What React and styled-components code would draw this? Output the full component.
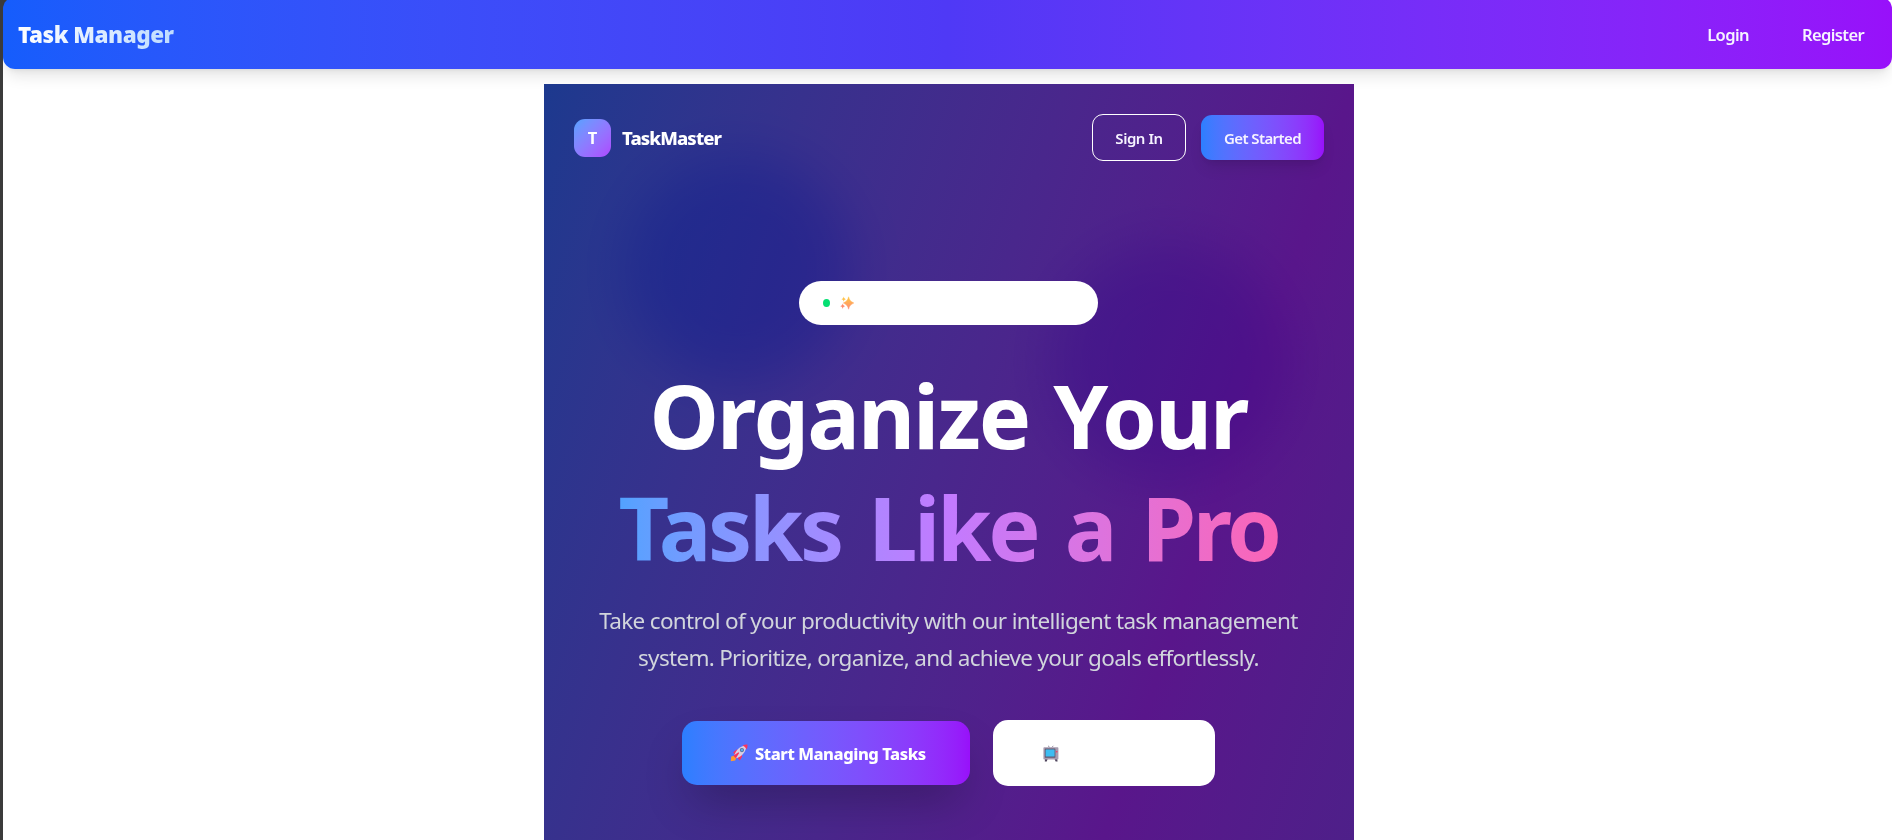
import React from "react";
import styled, { createGlobalStyle } from "styled-components";

const Global = createGlobalStyle`
  *, *::before, *::after { box-sizing: border-box; }
  html, body { margin: 0; height: 840px; overflow: hidden; background: #fff; }
  body { font-family: "Noto Sans", "Open Sans", sans-serif; color: #fff; }
  button, a { font: inherit; color: inherit; text-decoration: none; }
`;

const Page = styled.div`
  height: 840px;
  overflow: hidden;
  border-left: 3px solid #3b3b3b;
  background: #fff;
`;

const NavBackdrop = styled.div`
  background: linear-gradient(to right, #3b3b3b 0 12px, #fff 12px);
  height: 12px;
  margin-bottom: -15px;
`;

const NavBar = styled.nav`
  position: relative;
  display: flex;
  align-items: center;
  justify-content: space-between;
  height: 72px;
  padding: 4px 28px 0 15px;
  border-radius: 12px;
  background: linear-gradient(to right in oklab, #155dfc, #4f39f6, #9810fa);
  box-shadow: 0 10px 15px -3px rgba(0, 0, 0, 0.1), 0 4px 6px -4px rgba(0, 0, 0, 0.1);
`;

const Brand = styled.span`
  font-size: 22.5px;
  font-weight: 900;
  line-height: 30px;
  letter-spacing: -0.5px;
  background: linear-gradient(to right in oklab, #fff, #bedbff);
  background-clip: text;
  color: transparent;
`;

const NavLinks = styled.div`
  display: flex;
  gap: 53px;
`;

const NavLink = styled.a`
  font-size: 16.5px;
  font-weight: 600;
  line-height: 24px;
  color: #f6f3ff;
  letter-spacing: ${(p) => p.$spacing};
`;

const Hero = styled.main`
  position: relative;
  width: 810px;
  height: 2440px;
  margin: 15px auto 0 541px;
  background: linear-gradient(to bottom right in oklab, #1c398e, #59168b, #312c85);
`;

const Glow = styled.div`
  position: absolute;
  left: ${(p) => p.$x}px;
  top: ${(p) => p.$y}px;
  width: ${(p) => p.$size}px;
  height: ${(p) => p.$size}px;
  border-radius: 50%;
  background: ${(p) => p.$color};
  mix-blend-mode: multiply;
  filter: blur(28px);
  opacity: ${(p) => p.$opacity};
`;

const HeroContent = styled.div`
  position: relative;
  display: flex;
  flex-direction: column;
  align-items: center;
  width: 809px;
`;

const HeroHeader = styled.header`
  display: flex;
  align-items: center;
  justify-content: space-between;
  width: 100%;
  padding: 30px 29px 30px 30px;
`;

const Group = styled.div`
  display: flex;
  align-items: center;
  gap: ${(p) => p.$gap}px;
`;

const LogoMark = styled.div`
  display: grid;
  place-items: center;
  width: 37px;
  height: 38px;
  border-radius: 11px;
  background: linear-gradient(to bottom right in oklab, #51a2ff, #ad46ff);
  font-size: 16.5px;
  font-weight: 700;
`;

const LogoText = styled.span`
  font-size: 18.5px;
  font-weight: 800;
  letter-spacing: -0.9px;
`;

const HeaderButton = styled.button`
  display: grid;
  place-items: center;
  width: ${(p) => p.$width}px;
  height: ${(p) => (p.$primary ? 45 : 47)}px;
  padding: 0;
  border: ${(p) => (p.$primary ? "0" : "1px solid #fff")};
  border-radius: 11px;
  background: ${(p) => (p.$primary ? "linear-gradient(to right in oklab, #2b7fff, #9810fa)" : "transparent")};
  box-shadow: ${(p) => (p.$primary ? "0 10px 15px -3px rgba(0,0,0,.1), 0 4px 6px -4px rgba(0,0,0,.1)" : "none")};
  color: #f6f3ff;
  font-size: 15px;
  font-weight: 600;
  letter-spacing: ${(p) => p.$spacing};
`;

const Badge = styled.div`
  display: flex;
  align-items: center;
  gap: 10px;
  width: 299px;
  height: 44px;
  margin-top: 90px;
  padding-left: 24px;
  border-radius: 22px;
  background: #fff;
`;

const Dot = styled.span`
  width: 7px;
  height: 8px;
  border-radius: 50%;
  background: #05df72;
`;

const Title = styled.h1`
  margin: 34px 0 0;
  font-size: 88px;
  font-weight: 700;
  line-height: 112px;
  text-align: center;
  white-space: nowrap;
`;

const TitleLine = styled.span`
  display: block;
  width: fit-content;
  margin: 0 auto;
  letter-spacing: ${(p) => p.$spacing};
  word-spacing: ${(p) => p.$words};
`;

const GradientLine = styled(TitleLine)`
  background: linear-gradient(to right in oklab, #51a2ff, #c27aff, #fb64b6);
  background-clip: text;
  color: transparent;
`;

const Lead = styled.p`
  margin: 19px 0 0;
  font-size: 22.5px;
  line-height: 37px;
  text-align: center;
  white-space: nowrap;
  color: #d1d5dc;
`;

const LeadLine = styled.span`
  display: block;
  letter-spacing: ${(p) => p.$spacing};
`;

const Actions = styled.div`
  display: flex;
  align-items: center;
  gap: 23px;
  margin-top: 44px;
`;

const ActionButton = styled.button`
  display: flex;
  align-items: center;
  gap: 7px;
  width: ${(p) => (p.$primary ? 288 : 222)}px;
  height: ${(p) => (p.$primary ? 64 : 66)}px;
  padding: 0 0 0 ${(p) => (p.$primary ? 48 : 50)}px;
  border: 0;
  border-radius: 15px;
  background: ${(p) => (p.$primary ? "linear-gradient(to right in oklab, #2b7fff, #9810fa)" : "#fff")};
  box-shadow: ${(p) => (p.$primary ? "0 23px 47px -11px rgba(0,0,0,.28)" : "none")};
  font-size: 16.5px;
  font-weight: 800;
  letter-spacing: -0.45px;
  white-space: nowrap;
`;

const Icon = styled.svg`
  display: block;
  flex: none;
`;

function Sparkles() {
  return (
    <Icon width="14" height="14" viewBox="0 0 14 14">
      <defs>
        <linearGradient id="spark" x1="0" y1="0" x2="0" y2="1">
          <stop offset="0" stopColor="#ffc83d" />
          <stop offset="1" stopColor="#ff8a78" />
        </linearGradient>
      </defs>
      <path fill="url(#spark)" d="M8.6 .8 C9.4 4.2 10.6 5.4 13.8 7 C10.6 8.6 9.4 9.8 8.6 13.2 C7.8 9.8 6.6 8.6 3.4 7 C6.6 5.4 7.8 4.2 8.6 .8Z" stroke="url(#spark)" strokeWidth=".5" />
      <path fill="#ffc44d" d="M3.7 .6 C4 2.2 4.6 2.8 6 3.2 C4.6 3.6 4 4.2 3.7 5.8 C3.4 4.2 2.8 3.6 1.4 3.2 C2.8 2.8 3.4 2.2 3.7 .6Z" />
      <path fill="#ff8a6c" d="M2.7 7.6 C3.1 9.3 3.7 9.9 5.2 10.3 C3.7 10.7 3.1 11.3 2.7 13 C2.3 11.3 1.7 10.7 .2 10.3 C1.7 9.9 2.3 9.3 2.7 7.6Z" />
    </Icon>
  );
}

function Rocket() {
  return (
    <Icon width="18" height="18" viewBox="0 0 18 18">
      <path fill="#ff9b2e" d="M1.2 12.4 4 11.8 6.2 14 5.2 16.4 .8 17.2Z" />
      <path fill="#f8345e" d="M3.2 8.2 6.6 5.6 8.6 6.6 5 11Z M9.8 16.4 12.2 12.6 11.6 9.6 7 13.6Z" />
      <path fill="#d9cfe3" d="M4.2 11.8 C5.6 6.4 9.8 1.8 16.2 1.2 C16.8 6.8 12.2 12.2 6.8 14.2Z" />
      <path fill="#f8345e" d="M12.6 1.6 C14.2 .6 16 .4 17.4 .6 C17.8 2.2 17.4 4 16.5 5.4 C15.6 3.6 14.4 2.4 12.6 1.6Z M3.3 11.7 8.4 8.2 9.2 9 5.9 14.2Z" />
      <circle cx="11.9" cy="6.1" r="2.1" fill="#536b94" />
      <circle cx="11.9" cy="6.1" r="1.3" fill="#5aa9e8" />
    </Icon>
  );
}

function Television() {
  return (
    <Icon width="16" height="17" viewBox="0 0 16 17">
      <path d="M5 .8 6.8 2.4 M10.4 .8 8.8 2.4" stroke="#998fa3" strokeWidth="1" />
      <path fill="#50465e" d="M2 14h2.6l-.8 2.6H1.8z M11.6 14h2.6l.4 2.6h-2z" />
      <rect x=".4" y="2.2" width="15" height="12.4" rx=".8" fill="#a79bb0" />
      <rect x="1.8" y="3.4" width="10.6" height="9.4" rx=".6" fill="#625970" />
      <rect x="2.6" y="4.4" width="9" height="7.2" rx=".5" fill="#3dbdf2" />
      <circle cx="13.8" cy="6.8" r=".8" fill="#f8345e" />
    </Icon>
  );
}

export default function App() {
  return (
    <Page>
      <Global />
      <NavBackdrop />
      <NavBar>
        <Brand>Task Manager</Brand>
        <NavLinks>
          <NavLink href="#login" $spacing="-0.6px">Login</NavLink>
          <NavLink href="#register" $spacing="-0.6px">Register</NavLink>
        </NavLinks>
      </NavBar>
      <Hero>
        <Glow $x={79} $y={70} $size={230} $color="#2b7fff" $opacity={0.38} />
        <Glow $x={506} $y={158} $size={240} $color="#9810fa" $opacity={0.33} />
        <HeroContent>
          <HeroHeader>
            <Group $gap={11}>
              <LogoMark>T</LogoMark>
              <LogoText>TaskMaster</LogoText>
            </Group>
            <Group $gap={15}>
              <HeaderButton $width={94} $spacing="-0.45px">Sign In</HeaderButton>
              <HeaderButton $primary $width={123} $spacing="-0.6px">Get Started</HeaderButton>
            </Group>
          </HeroHeader>
          <Badge>
            <Dot />
            <Sparkles />
          </Badge>
          <Title>
            <TitleLine $spacing="-2px" $words="3px">Organize Your</TitleLine>
            <GradientLine $spacing="-3.4px" $words="8px">Tasks Like a Pro</GradientLine>
          </Title>
          <Lead>
            <LeadLine $spacing="-0.67px">Take control of your productivity with our intelligent task management</LeadLine>
            <LeadLine $spacing="-0.7px">system. Prioritize, organize, and achieve your goals effortlessly.</LeadLine>
          </Lead>
          <Actions>
            <ActionButton $primary>
              <Rocket />
              Start Managing Tasks
            </ActionButton>
            <ActionButton aria-label="Watch">
              <Television />
            </ActionButton>
          </Actions>
        </HeroContent>
      </Hero>
    </Page>
  );
}
